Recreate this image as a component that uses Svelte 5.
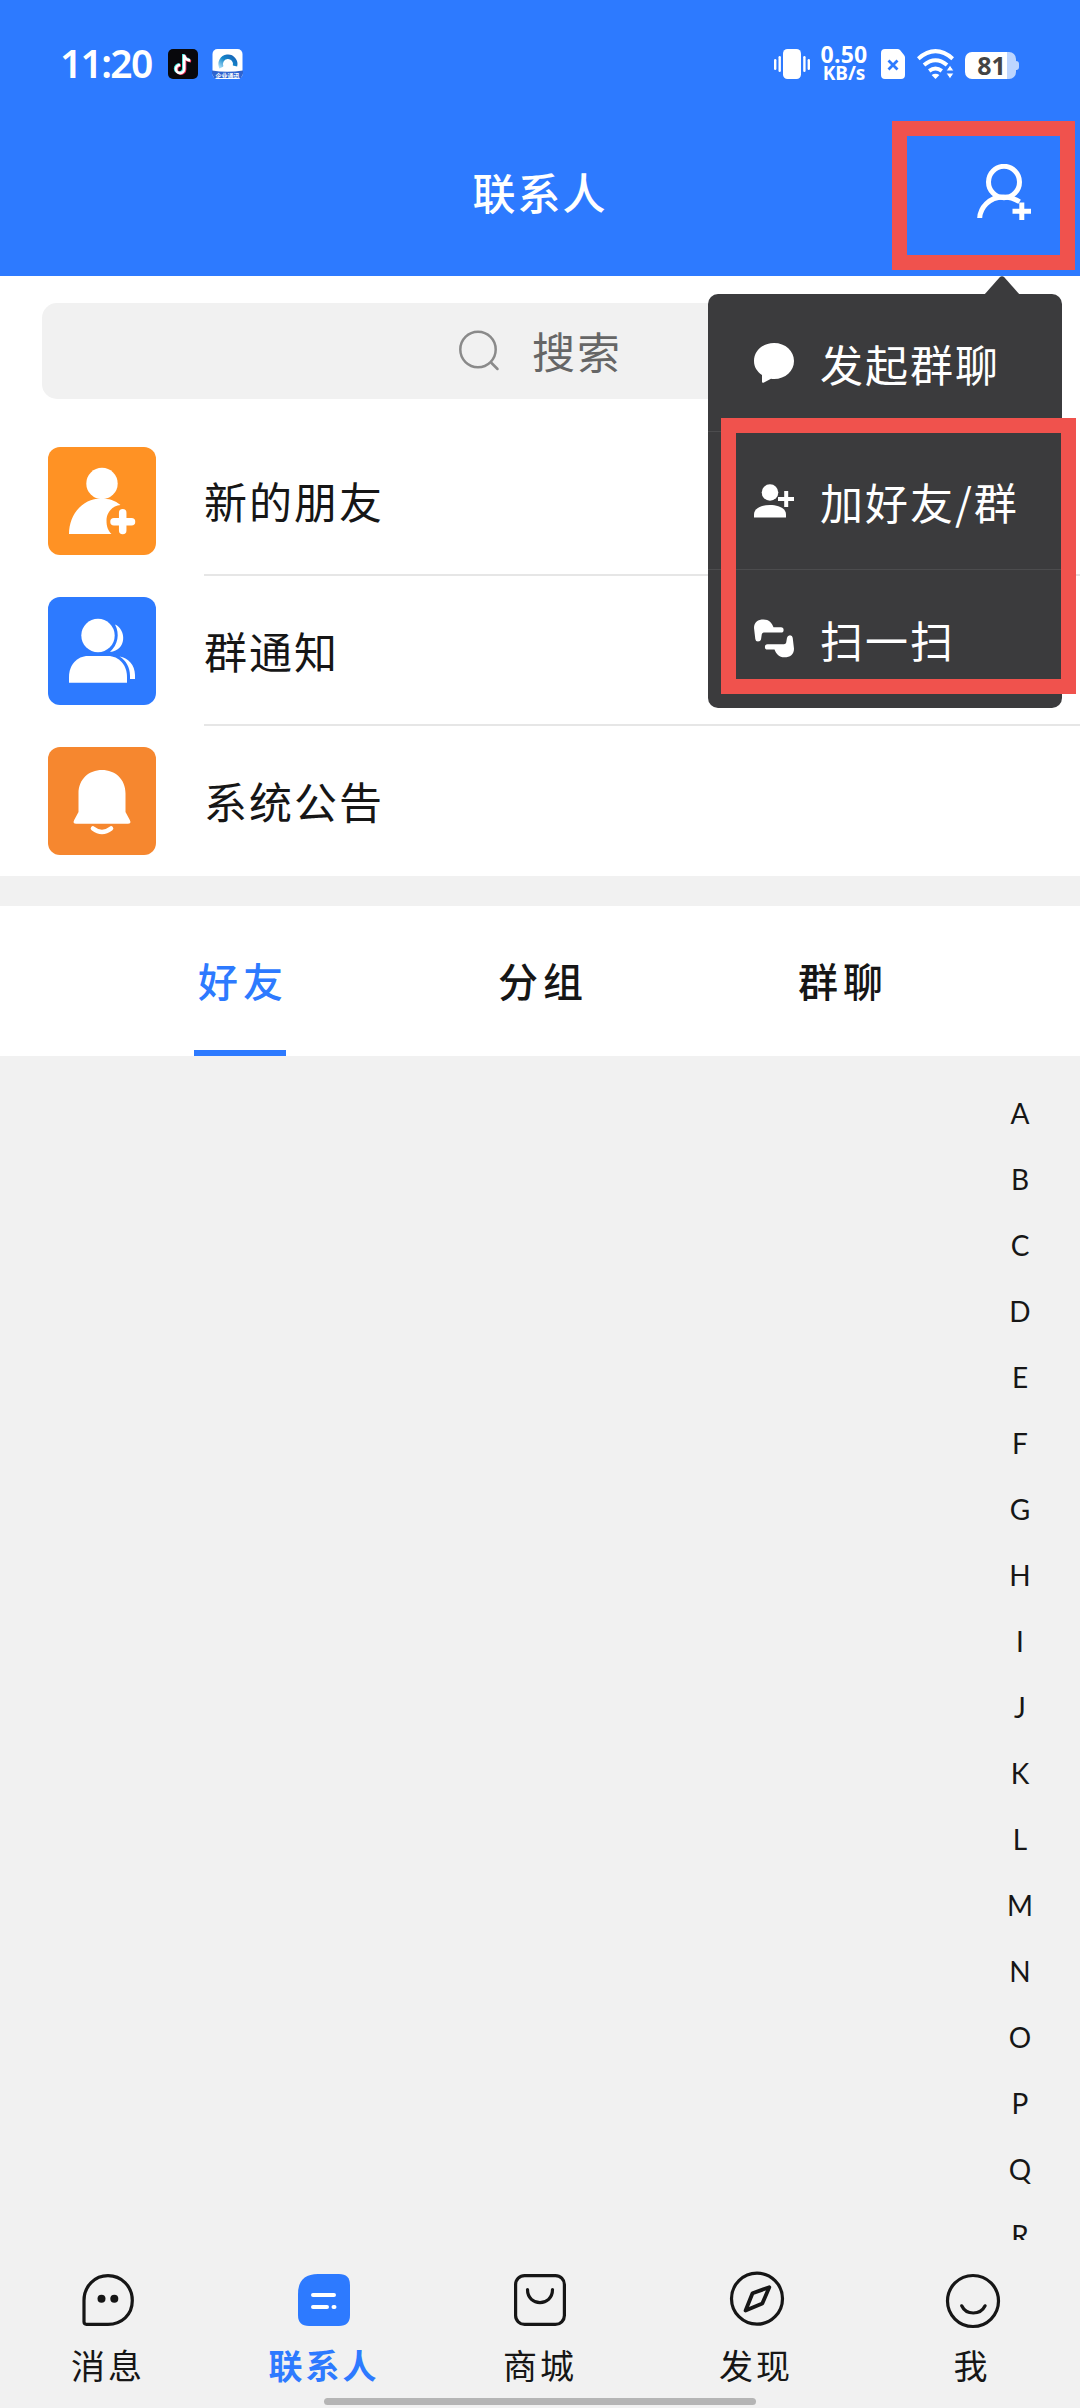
<script>
  const contacts = [
    { label: '新的朋友', icon: 'add' },
    { label: '群通知', icon: 'group' },
    { label: '系统公告', icon: 'bell' },
  ];
  const tabs = ['好友', '分组', '群聊'];
  const letters = 'ABCDEFGHIJKLMNOPQR'.split('');
  const menu = [
    { label: '发起群聊', icon: 'bubble' },
    { label: '加好友/群', icon: 'person' },
    { label: '扫一扫', icon: 'scan' },
  ];
  const nav = ['消息', '联系人', '商城', '发现', '我'];
</script>

<div class="screen">
  <div class="status">
    <span class="time">11:20</span>
    <svg class="tiktok" width="30" height="30" viewBox="0 0 30 30">
      <rect width="30" height="30" rx="5" fill="#08080c" />
      <g fill="none" stroke-width="2.600">
        <path d="M15.300 5v14.500a4.100 4.100 0 1 1-4.100-4.100M15.300 5.500c.6 3 3 4.700 6 4.900" stroke="#3fe0dc" />
        <path d="M17.100 6.500V20.500a4.100 4.100 0 1 1-4.100-4.100M17.100 7.300c.7 3 3 4.700 6 4.900" stroke="#f0305c" />
        <path d="M16.200 5.700V20a4.100 4.100 0 1 1-4.100-4.100M16.200 6.500c.7 3 3 4.700 6 4.900" stroke="#fff" />
      </g>
    </svg>
    <svg class="app" width="31" height="30" viewBox="0 0 31 30">
      <defs>
        <linearGradient id="ring" x1="0" y1="1" x2="1" y2="0">
          <stop offset="0" stop-color="#9fd8f5" />
          <stop offset=".5" stop-color="#1588ca" />
          <stop offset="1" stop-color="#1764b8" />
        </linearGradient>
      </defs>
      <rect x=".5" width="30" height="30" rx="5" fill="#fff" />
      <path d="M9.500 18.500a7.300 7.300 0 1 1 13.500-1.500" fill="none" stroke="url(#ring)" stroke-width="4.500" />
      <path d="M11.500 20c-1-3 1-4 2.500-4 1-3.500 5.500-2.500 5 .8 2-.3 3 1.200 2.500 3.200z" fill="#fff" />
      <path d="M0 21.500q15 2.500 31 0v3L29 29H2l-2-4.500z" fill="#2e63cf" />
      <text x="15.500" y="28.800" text-anchor="middle" font-size="6" font-weight="700" fill="#fff">企业通讯</text>
    </svg>
    <div class="indicators">
      <svg width="36" height="30" viewBox="0 0 36 30" fill="#fff">
        <rect x="9" width="18" height="30" rx="4.500" />
        <rect x="0" y="10" width="2.400" height="11" rx="1.200" />
        <rect x="4.500" y="7" width="2.400" height="16" rx="1.200" />
        <rect x="29.200" y="7" width="2.400" height="16" rx="1.200" />
        <rect x="33.600" y="10" width="2.400" height="11" rx="1.200" />
      </svg>
      <div class="speed"><span class="rate">0.50</span><span class="unit">KB/s</span></div>
      <svg class="sim" width="24" height="30" viewBox="0 0 24 30">
        <path d="M4 0h12.500q1.500 0 2.500 1l4 5q1 1 1 2.500V26q0 4-4 4H4q-4 0-4-4V4q0-4 4-4z" fill="#fff" />
        <path d="M7.500 11.500l9 9M16.500 11.500l-9 9" stroke="#2d7aff" stroke-width="2.800" />
      </svg>
      <svg class="wifi" width="37" height="30" viewBox="0 0 37 30">
        <g fill="none" stroke="#fff" stroke-width="4">
          <path d="M1.300 9.700q17.200-15 34.400 0" />
          <path d="M7 16q11.500-9.500 23 0" />
          <path d="M12.200 21.800q6.300-4.500 12.600 0" />
        </g>
        <path d="M14.600 26q3.900-2.500 7.800 0l-3.900 4z" fill="#fff" />
        <path d="M33 16l4 6h-8zM33 30l4-6h-8z" fill="#fff" stroke="#2d7aff" stroke-width="1" />
      </svg>
      <div class="battery"><div class="cell">81</div><i></i></div>
    </div>
  </div>

  <header>
    <h1>联系人</h1>
    <svg class="adduser" width="56" height="56" viewBox="0 0 56 56" fill="none" stroke="#fff" stroke-width="5">
      <ellipse cx="28" cy="18" rx="15.500" ry="15.700" />
      <path d="M3.700 54c.5-10 9.300-21 23.300-21 6.500 0 11.500 1.500 16.500 4.800" />
      <path d="M36.500 47.200h18.500M45.800 38.500v17.500" />
    </svg>
  </header>

  <section class="top">
    <div class="search">
      <svg width="42" height="42" viewBox="0 0 42 42" fill="none" stroke="#8a8a8a" stroke-width="2.500">
        <circle cx="20" cy="19.500" r="17.700" />
        <path d="M33.500 33l6 6" stroke-linecap="round" />
      </svg>
      <span>搜索</span>
    </div>
    {#each contacts as c}
      <div class="contact">
        <svg width="108" height="108" viewBox="0 0 108 108" fill="#fff">
          {#if c.icon === 'add'}
            <rect width="108" height="108" rx="12" fill="#ff9224" />
            <circle cx="54" cy="36.500" r="15.700" />
            <path d="M21 87c0-20 14-35.500 32-35.500 8 0 14 2 19.500 6.500-8 .5-14 7.500-14 15.500 0 6 1.500 10 5 13.500z" />
            <path d="M74.700 65.700V83.500M66 74.700H83.500" stroke="#fff" stroke-width="7.500" stroke-linecap="round" />
          {:else if c.icon === 'group'}
            <rect width="108" height="108" rx="12" fill="#2d7aff" />
            <circle cx="50" cy="38.500" r="16.700" />
            <path d="M67 27.500c11.500 5 12 26-5 27.500 8-7.500 10-18 5-27.500z" />
            <path d="M21 85.700V80c0-12 8-21 19-21h20c11 0 19 9 19 21v5.700z" />
            <path d="M71.500 59.500C80 60.500 87 68 87 78v4h-5v-3c0-9-4-15.500-10.500-19.500z" />
          {:else}
            <rect width="108" height="108" rx="12" fill="#f6872f" />
            <path d="M30.500 46.500C30.500 32 41 23 54 23s23.500 9 23.500 23.500V65l4.300 8q2 3.800-2 3.800H28.200q-4 0-2-3.800l4.300-8z" />
            <path d="M45 81.500q9 7 18 0" fill="none" stroke="#fff" stroke-width="4.600" stroke-linecap="round" />
          {/if}
        </svg>
        <div class="name">{c.label}</div>
      </div>
    {/each}
  </section>

  <div class="tabs">
    {#each tabs as t, i}
      <div class="tab" class:active={i === 0}><span>{t}</span></div>
    {/each}
  </div>

  <main>
    {#each letters as l}
      <div class="letter">{l}</div>
    {/each}
  </main>

  <nav>
    {#each nav as n, i}
      <div class="item" class:current={i === 1}>
        <svg width="60" height="60" viewBox="0 0 60 60" fill="none" stroke="#161616" stroke-width="3.200" stroke-linecap="round" stroke-linejoin="round">
          {#if i === 0}
            <path d="M6 30.500C6 16 17 5.700 30 5.700S54.300 16 54.300 30.500 43.500 54.300 30 54.300H8.500Q6 54.300 6 51.800z" />
            <g fill="#161616" stroke="none"><circle cx="23.500" cy="28.700" r="4" /><circle cx="36.300" cy="28.700" r="4" /></g>
          {:else if i === 1}
            <path d="M24 4H45Q56 4 56 15V45Q56 56 45 56H15Q4 56 4 45V24Q4 4 24 4z" fill="#2d7aff" stroke="none" />
            <path d="M19 25h21M19 37h14M39.500 37h1" stroke="#fff" stroke-width="4" />
          {:else if i === 2}
            <rect x="5.600" y="5.600" width="48.800" height="48.800" rx="9" />
            <path d="M17.500 19.500c0 17.500 25 17.500 25 0" />
          {:else if i === 3}
            <circle cx="31" cy="28.700" r="25.500" />
            <path d="M43.300 17.200L26.500 23.300 19.600 40.500 36.300 33.600z" stroke-width="3.800" />
          {:else}
            <circle cx="31" cy="31" r="25.500" />
            <path d="M19.700 35.800c4.500 9.600 18.600 9.600 23.400 0" />
          {/if}
        </svg>
        <span>{n}</span>
      </div>
    {/each}
  </nav>
  <div class="homebar"></div>

  <div class="popup">
    <svg class="tip" width="36" height="19" viewBox="0 0 36 19"><path d="M0 19L15.500 1.500Q18 -1 20.500 1.500L36 19z" fill="#3b3b3d" /></svg>
    {#each menu as m}
      <div class="option">
        <svg width="40" height="40" viewBox="0 0 40 40" fill="#fff">
          {#if m.icon === 'bubble'}
            <path d="M20 0c11.500 0 20 8 20 18s-8.500 18-20 18q-1.500 0-3-.3L9.500 39.700Q8 40.300 8 38.500V32C3 28.500 0 24 0 18 0 8 8.500 0 20 0z" />
          {:else if m.icon === 'person'}
            <circle cx="16" cy="11.500" r="8.300" />
            <path d="M0 36.500v-3C0 27 8 24 16 24s16 3 16 9.500v3z" />
            <path d="M24 18h16M32.200 10v16" stroke="#fff" stroke-width="4" />
          {:else}
            <path d="M0 9C0 3 4 .5 9.500.5 15 .5 18 4 19.500 8.300h7.500a2.500 2.500 0 0 1 0 5.200H10q-1.800 0-2.200 1.800L7 20.500Q6.500 22.500 4 22.500T1.300 20z" />
            <path d="M40 29.800c0 6-4 8.500-9.500 8.500-5.500 0-8.500-3.500-10-7.800H13.500a2.500 2.500 0 0 1 0-5.200H30q1.800 0 2.200-1.800L33 18.800q.5-2.500 3-2.500t2.700 2.500z" />
          {/if}
        </svg>
        <span>{m.label}</span>
      </div>
    {/each}
  </div>

  <div class="mark mark-button"></div>
  <div class="mark mark-options"></div>
</div>

<style>
  :global(body) { margin: 0; background: #f1f1f1; }
  .screen {
    position: relative;
    width: 1080px;
    height: 2408px;
    overflow: hidden;
    display: flex;
    flex-direction: column;
    background: #f1f1f1;
    color: #161616;
    font-family: "Noto Sans CJK SC", sans-serif;
  }
  svg { display: block; flex: none; }
  .status {
    box-sizing: border-box;
    height: 114px;
    padding: 49px 60px 0;
    display: flex;
    align-items: flex-start;
    background: #2d7aff;
    color: #fff;
  }
  .time {
    width: 108px;
    font: 600 39px/28px "Noto Sans", sans-serif;
    letter-spacing: -1.700px;
  }
  .app { margin-left: 14px; }
  .indicators { margin-left: auto; display: flex; align-items: flex-start; }
  .speed {
    width: 50px;
    margin: -5px 10px 0 9px;
    display: flex;
    flex-direction: column;
    align-items: center;
    font-family: "Noto Sans", sans-serif;
    font-weight: 700;
  }
  .rate { font-size: 23px; line-height: 20px; letter-spacing: .3px; }
  .unit { font-size: 19px; line-height: 18px; }
  .sim { margin-left: 2px; }
  .wifi { margin-left: 12px; }
  .battery { display: flex; align-items: center; margin: 3px 1px 0 11px; }
  .cell {
    box-sizing: border-box;
    width: 51px;
    height: 27px;
    padding-left: 2px;
    border-radius: 7px;
    background: linear-gradient(90deg, #fff 82%, #bcd5ff 82%);
    color: #444;
    font: 700 25px/27px "Noto Sans", sans-serif;
    text-align: center;
  }
  .battery i { width: 3px; height: 9px; border-radius: 0 4px 4px 0; background: #bcd5ff; }
  header {
    height: 162px;
    display: grid;
    grid-template-columns: 1fr auto 1fr;
    align-items: start;
    background: #2d7aff;
    color: #fff;
  }
  h1 {
    grid-column: 2;
    margin: 47px 0 0;
    font-size: 43px;
    line-height: 60px;
    font-weight: 500;
    letter-spacing: 2px;
  }
  .adduser { justify-self: end; margin: 50px 48px 0 0; }
  .top { height: 600px; background: #fff; }
  .search {
    height: 96px;
    margin: 27px 42px;
    display: flex;
    align-items: center;
    justify-content: center;
    gap: 32px;
    border-radius: 15px;
    background: #f1f1f1;
    color: #666;
    font-size: 43px;
    letter-spacing: 2px;
  }
  .search span { line-height: 60px; padding-bottom: 2px; }
  .contact {
    height: 150px;
    padding-left: 48px;
    display: flex;
    align-items: center;
    gap: 48px;
  }
  .name {
    flex: 1;
    box-sizing: border-box;
    height: 150px;
    line-height: 148px;
    font-size: 43px;
    letter-spacing: 2px;
    border-bottom: 2px solid #e6e6e6;
  }
  .contact:last-child .name { border-color: transparent; }
  .tabs {
    height: 150px;
    margin-top: 30px;
    padding: 0 90px;
    display: flex;
    background: #fff;
  }
  .tab { flex: 1; display: flex; justify-content: center; font-size: 40px; font-weight: 500; }
  .tab span {
    box-sizing: border-box;
    width: 92px;
    padding-left: 4px;
    height: 150px;
    line-height: 149px;
    letter-spacing: 5px;
    white-space: nowrap;
    border-bottom: 6px solid transparent;
  }
  .tab.active span { color: #2d7aff; border-color: #2d7aff; }
  main {
    box-sizing: border-box;
    height: 1184px;
    padding: 24px 30px 0 0;
    overflow: hidden;
    display: flex;
    flex-direction: column;
    align-items: flex-end;
  }
  .letter {
    flex: none;
    width: 60px;
    height: 66px;
    line-height: 66px;
    text-align: center;
    font-family: Lato, sans-serif;
    font-size: 28px;
  }
  nav { height: 158px; display: flex; }
  .item {
    flex: 1;
    padding-top: 30px;
    display: flex;
    flex-direction: column;
    align-items: center;
    gap: 10px;
    font-size: 34px;
    letter-spacing: 3px;
  }
  .item span { line-height: 49px; }
  .current { color: #2d7aff; font-weight: 700; }
  .homebar {
    width: 432px;
    height: 7px;
    margin: 0 auto;
    border-radius: 4px;
    background: #b5b5b5;
  }
  .popup {
    position: absolute;
    left: 708px;
    top: 294px;
    width: 354px;
    height: 414px;
    border-radius: 10px;
    background: #3b3b3d;
    color: #fff;
  }
  .tip { position: absolute; left: 276px; top: -18px; }
  .option {
    box-sizing: border-box;
    height: 138px;
    padding-left: 46px;
    display: flex;
    align-items: center;
    gap: 26px;
    font-size: 43px;
    letter-spacing: 2px;
    white-space: nowrap;
    border-bottom: 1px solid #4c4c4e;
  }
  .option:last-child { border-color: transparent; }
  .mark { position: absolute; box-sizing: border-box; border: 15px solid #f0524d; }
  .mark-button { left: 892px; top: 121px; width: 183px; height: 149px; }
  .mark-options { left: 721px; top: 418px; width: 355px; height: 276px; }
</style>
